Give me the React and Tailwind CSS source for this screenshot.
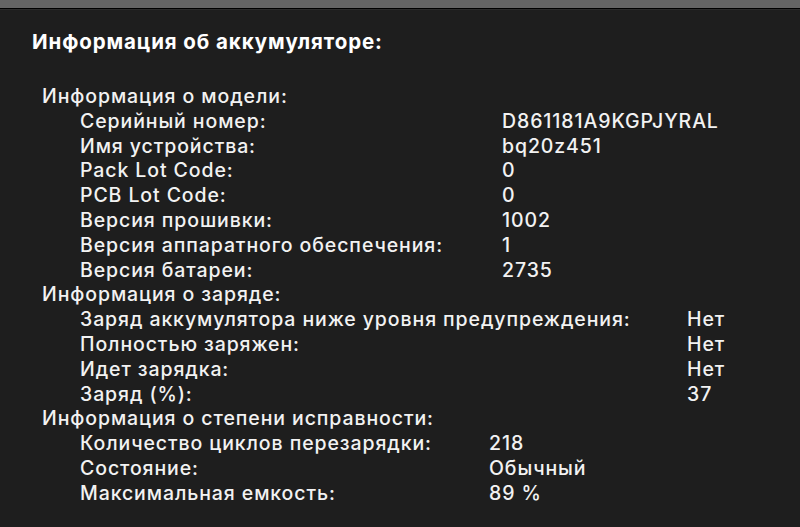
import React from 'react';

const groups = [
  {
    title: 'Информация о модели:',
    cols: 'grid-cols-[422px_1fr]',
    rows: [
      ['Серийный номер:', 'D861181A9KGPJYRAL'],
      ['Имя устройства:', 'bq20z451'],
      ['Pack Lot Code:', '0'],
      ['PCB Lot Code:', '0'],
      ['Версия прошивки:', '1002'],
      ['Версия аппаратного обеспечения:', '1'],
      ['Версия батареи:', '2735'],
    ],
  },
  {
    title: 'Информация о заряде:',
    cols: 'grid-cols-[607px_1fr]',
    rows: [
      ['Заряд аккумулятора ниже уровня предупреждения:', 'Нет'],
      ['Полностью заряжен:', 'Нет'],
      ['Идет зарядка:', 'Нет'],
      ['Заряд (%):', '37'],
    ],
  },
  {
    title: 'Информация о степени исправности:',
    cols: 'grid-cols-[409px_1fr]',
    rows: [
      ['Количество циклов перезарядки:', '218'],
      ['Состояние:', 'Обычный'],
      ['Максимальная емкость:', '89 %'],
    ],
  },
];

export default function App() {
  return (
    <div className="w-[800px] h-[527px] overflow-hidden bg-[#1e1e1e] text-[#f2f2f2] font-['Inter',sans-serif]">
      {/* window chrome strip */}
      <div className="h-[8px] bg-[#656565]" />
      <div className="h-[1px] bg-black" />
      <div className="h-[1px] bg-[#2c2c2c]" />

      <div className="pl-[32px] pt-[19px]">
        <h1 className="text-[20.5px] font-bold leading-[26px] tracking-[0.9px] text-white">
          Информация об аккумуляторе:
        </h1>

        <div className="mt-[29px] pl-[10px] text-[19.5px] font-medium leading-[24.8px] tracking-[0.9px]">
          {groups.map((g) => (
            <div key={g.title}>
              <div>{g.title}</div>
              <div className={`grid ${g.cols} pl-[38px]`}>
                {g.rows.map(([label, value]) => (
                  <React.Fragment key={label}>
                    <div className="whitespace-nowrap">{label}</div>
                    <div className="whitespace-nowrap">{value}</div>
                  </React.Fragment>
                ))}
              </div>
            </div>
          ))}
        </div>
      </div>
    </div>
  );
}
